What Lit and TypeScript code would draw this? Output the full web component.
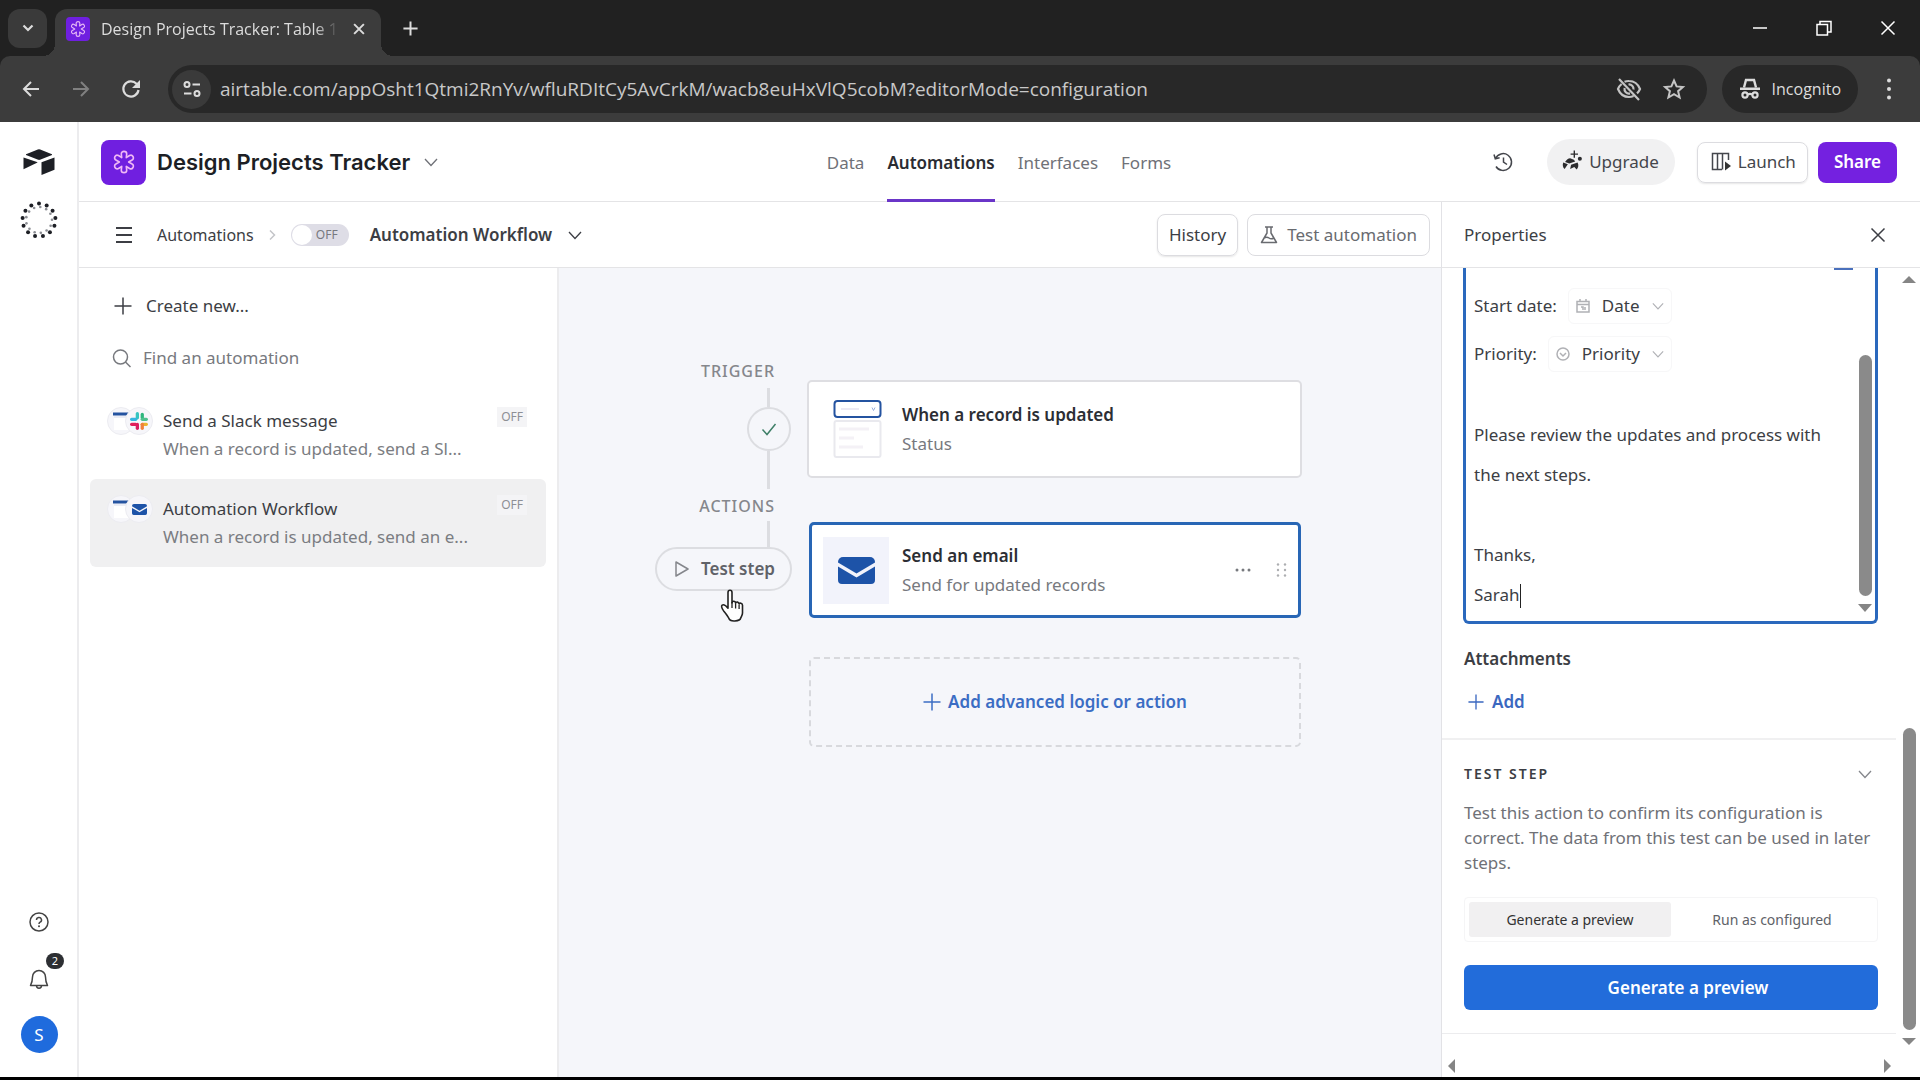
import { LitElement, html, svg, css } from "lit";
import { customElement, state } from "lit/decorators.js";
import { classMap } from "lit/directives/class-map.js";

const icon = (size: number, box: string, body: unknown, cls = "") =>
  html`<svg class="icon ${cls}" width=${size} height=${size} viewBox=${box} fill="none" stroke="currentColor" stroke-width="1.5" aria-hidden="true">${body}</svg>`;

const chevron = (size = 14) => icon(size, "0 0 14 14", svg`<path stroke-width="1.300" d="M1 4l6 6.500L13 4"/>`);
const cross = (size = 16, w = 1.5) =>
  icon(size, "0 0 16 16", svg`<path stroke-width=${w} d="M1.500 1.500l13 13M14.500 1.500l-13 13"/>`);
const plus = (size = 18, w = 1.5) => icon(size, "0 0 18 18", svg`<path stroke-width=${w} d="M9 0.500v17M0.500 9h17"/>`);
const flower = svg`<path stroke-linejoin="round" d="M12 2.200c1.500 0 2.500 1 2.500 2.300L14.100 8l3-2c1.200-.7 2.500-.3 3.200.9s.4 2.600-.8 3.200L16.300 12l3.200 1.900c1.200.6 1.500 2 .8 3.200s-2 1.600-3.200.9l-3-2 .4 3.500c0 1.300-1 2.300-2.500 2.300s-2.500-1-2.500-2.300L9.900 16l-3 2c-1.200.7-2.500.3-3.200-.9s-.4-2.600.8-3.200L7.700 12l-3.200-1.900c-1.200-.6-1.500-2-.8-3.200s2-1.600 3.200-.9l3 2-.4-3.500c0-1.300 1-2.300 2.500-2.300z"/>`;
const envelope = svg`<path fill="#1d53a8" stroke="none" d="M5 0h27a5 5 0 0 1 5 5v0.500L18.500 16.500 0 5.500V5a5 5 0 0 1 5-5z"/><path fill="#1d53a8" stroke="none" d="M0 9.500l18.500 11L37 9.500V23a4 4 0 0 1-4 4H4a4 4 0 0 1-4-4z"/>`;
const slack = svg`<g stroke="none">
  <rect x="7" y="0" width="4" height="9" rx="2" fill="#36c5c0"/><rect x="0" y="7" width="9" height="4" rx="2" fill="#36b5e0"/>
  <rect x="13" y="1" width="4" height="8" rx="2" fill="#2eb67d"/><rect x="13" y="7" width="9" height="4" rx="2" fill="#4fc08d"/>
  <rect x="7" y="13" width="4" height="9" rx="2" fill="#d81b60"/><rect x="0" y="13" width="9" height="4" rx="2" fill="#e01e5a"/>
  <rect x="13" y="13" width="9" height="4" rx="2" fill="#ecb22e"/><rect x="13" y="13" width="4" height="9" rx="2" fill="#f0803c"/></g>`;

interface Automation { name: string; summary: string; app: "slack" | "email"; }

const AUTOMATIONS: Automation[] = [
  { name: "Send a Slack message", summary: "When a record is updated, send a Sl...", app: "slack" },
  { name: "Automation Workflow", summary: "When a record is updated, send an e...", app: "email" },
];

const reset = css`
  :host { display: block; }
  * { box-sizing: border-box; }
  button, input { font: inherit; color: inherit; background: none; border: 0; padding: 0; margin: 0; }
  button { display: inline-flex; align-items: center; justify-content: center; cursor: pointer; white-space: nowrap; }
  a { color: inherit; text-decoration: none; }
  h1, h2, h3, p, ul { margin: 0; padding: 0; font: inherit; }
  .icon { display: block; flex: none; }
`;

@customElement("browser-chrome")
class BrowserChrome extends LitElement {
  static styles = [reset, css`
    :host { background: #212121; color: #dcdcdc; font: 16px/24px "Open Sans", sans-serif; }
    .strip { display: flex; align-items: center; height: 56px; padding: 0 0 0 8px; }
    .search { width: 39px; height: 39px; border-radius: 12px; background: #3a3a3a; }
    .tab { display: flex; align-items: center; align-self: flex-end; gap: 8px; width: 326px; height: 47px; margin-left: 8px; padding: 0 10px 8px 11px; background: #3c3c3c; border-radius: 12px 12px 0 0; position: relative; }
    .tab::before, .tab::after { content: ""; position: absolute; bottom: 0; width: 12px; height: 12px; }
    .tab::before { left: -12px; background: radial-gradient(circle at 0 0, transparent 12px, #3c3c3c 12px); }
    .tab::after { right: -12px; background: radial-gradient(circle at 100% 0, transparent 12px, #3c3c3c 12px); }
    .favicon { display: grid; place-items: center; width: 24px; height: 24px; border-radius: 4px; background: #6f1fe0; color: #e6b8f5; flex: none; }
    .tab-title { flex: 1; padding-left: 3px; white-space: nowrap; -webkit-mask-image: linear-gradient(90deg, #000 90%, transparent); mask-image: linear-gradient(90deg, #000 90%, transparent); }
    .tab button { width: 24px; height: 24px; }
    .new { width: 36px; height: 36px; margin-left: 11px; }
    .window { display: flex; margin-left: auto; color: #fff; }
    .window button { width: 64px; height: 56px; }
    .toolbar { display: flex; align-items: center; height: 66px; background: #3c3c3c; border-radius: 10px 10px 0 0; padding: 0 13px 0 13px; }
    .nav { width: 36px; height: 36px; }
    .nav + .nav { margin-left: 14px; }
    .dim { color: #808080; }
    .omni { flex: 1; display: flex; align-items: center; height: 48px; margin: 0 15px 0 19px; padding: 0 19px 0 4px; border-radius: 24px; background: #282828; }
    .site { width: 39px; height: 39px; border-radius: 50%; background: #3a3a3a; }
    .url { flex: 1; min-width: 0; margin-left: 9px; font-size: 19px; color: #c8c8c8; outline: 0; }
    .omni .act { width: 27px; height: 36px; margin-left: 18px; color: #c4c4c4; }
    .incognito { display: flex; align-items: center; gap: 11px; height: 48px; padding: 0 17px; border-radius: 24px; background: #282828; }
    .menu { width: 36px; height: 36px; margin-left: 13px; }
  `];

  render() {
    return html`
      <div class="strip">
        <button class="search" aria-label="Search tabs">${icon(14, "0 0 14 14", svg`<path stroke-width="2.200" d="M2.500 4.500L7 9l4.500-4.500"/>`)}</button>
        <div class="tab">
          <span class="favicon">${icon(18, "0 0 24 24", flower)}</span>
          <span class="tab-title">Design Projects Tracker: Table 1</span>
          <button aria-label="Close tab">${cross(12, 2.6)}</button>
        </div>
        <button class="new" aria-label="New tab">${plus(15, 2.4)}</button>
        <div class="window">
          <button aria-label="Minimize">${icon(16, "0 0 16 16", svg`<path d="M1 8h14"/>`)}</button>
          <button aria-label="Restore">${icon(16, "0 0 16 16", svg`<path d="M1 4.500h10.500V15H1zM4 4V1.500h11V12h-3"/>`)}</button>
          <button aria-label="Close window">${cross(16)}</button>
        </div>
      </div>
      <div class="toolbar">
        <button class="nav" aria-label="Back">${icon(18, "0 0 18 18", svg`<path stroke-width="2" d="M17 9H2M9 2L2 9l7 7"/>`)}</button>
        <button class="nav dim" aria-label="Forward">${icon(18, "0 0 18 18", svg`<path stroke-width="2" d="M1 9h15M9 2l7 7-7 7"/>`)}</button>
        <button class="nav" aria-label="Reload">${icon(20, "0 0 20 20", svg`<path stroke-width="2.200" d="M17.500 11A7.600 7.600 0 1 1 15.500 4.700L18 7"/><path fill="currentColor" stroke="none" d="M19 1v8h-8z"/>`)}</button>
        <div class="omni">
          <button class="site" aria-label="Site information">${icon(20, "0 0 20 20", svg`<circle cx="5" cy="5.500" r="2.500" stroke-width="2"/><path stroke-width="2" d="M10.500 5.500H18M2 14.500h7.500"/><circle cx="15" cy="14.500" r="2.500" stroke-width="2"/>`)}</button>
          <input class="url" aria-label="Address" value="airtable.com/appOsht1Qtmi2RnYv/wfluRDItCy5AvCrkM/wacb8euHxVlQ5cobM?editorMode=configuration">
          <button class="act" aria-label="Third-party cookies blocked">${icon(26, "0 0 26 26", svg`<path stroke-width="2.200" d="M8.500 5.800A11 11 0 0 1 13 5c5 0 9 3 11 8-.7 1.700-1.700 3.200-3 4.400M17.500 19.900A11 11 0 0 1 13 21c-5 0-9-3-11-8 .8-2 2-3.700 3.600-5M12.500 8.500a4.500 4.500 0 0 1 5 5M14 17.400A4.500 4.500 0 0 1 8.600 12M3 3l20 21"/>`)}</button>
          <button class="act" aria-label="Bookmark">${icon(24, "0 0 24 24", svg`<path stroke-width="2" stroke-linejoin="miter" d="M12 3.500l2.600 5.900 6.300.6-4.800 4.200 1.500 6.300L12 17.100l-5.600 3.400 1.500-6.300L3.100 10l6.300-.6z"/>`)}</button>
        </div>
        <div class="incognito">
          ${icon(22, "0 0 22 22", svg`<path fill="currentColor" stroke="none" d="M1 9.500h20v2.500H1z"/><path stroke-width="2.400" d="M5 9.500L7 2h8l2 7.500"/><circle cx="6" cy="17" r="2.600" stroke-width="2.200"/><circle cx="16" cy="17" r="2.600" stroke-width="2.200"/><path stroke-width="2.200" d="M8.600 16.500q2.400-1.200 4.800 0"/>`)}
          <span>Incognito</span>
        </div>
        <button class="menu" aria-label="Menu">${icon(22, "0 0 22 22", svg`<g fill="currentColor" stroke="none"><circle cx="11" cy="2.500" r="2"/><circle cx="11" cy="11" r="2"/><circle cx="11" cy="19.500" r="2"/></g>`)}</button>
      </div>`;
  }
}

@customElement("side-rail")
class SideRail extends LitElement {
  static styles = [reset, css`
    :host { display: flex; flex-direction: column; align-items: center; width: 79px; padding: 23px 0 24px 1px; border-right: 2px solid #ececee; color: #444; }
    .loader { margin-top: 24px; color: #1d1f25; }
    .bottom { display: flex; flex-direction: column; align-items: center; margin-top: auto; }
    .bell { position: relative; margin-top: 36px; }
    .count { position: absolute; left: 18px; top: -15px; width: 18px; height: 16px; border-radius: 8px; background: #2d2f33; color: #fff; font: 11px/16px "Noto Sans", sans-serif; text-align: center; }
    .avatar { width: 37px; height: 37px; margin-top: 26px; border-radius: 50%; background: #1f6bdd; color: #fff; font: 17px/24px "Noto Sans", sans-serif; }
  `];

  render() {
    const dots = Array.from({ length: 13 }, (_, i) => (i * 2 * Math.PI) / 13 - Math.PI / 2);
    return html`
      <a href="#home" aria-label="Home">${icon(32, "0 0 32 32", svg`<g fill="#1d1f25" stroke="none"><path d="M14.800 4.400L3 9.300v.7l12.200 4.800c.6.200 1.200.2 1.800 0L29 10v-.7L17.200 4.400a3 3 0 0 0-2.400 0z"/><path d="M31.500 12.500v12.200L18.500 30V17.300z"/><path d="M0.500 12.600v11.600L13.500 18l1.200-.7z"/></g>`)}</a>
      <div class="loader">${icon(38, "0 0 38 38", dots.map((a) => svg`<g stroke="none"><circle fill="#1d1f25" cx=${19 + 16.5 * Math.cos(a)} cy=${19 + 16.5 * Math.sin(a)} r="2"/><circle fill="#8c8e94" cx=${19 + 13 * Math.cos(a + 0.1)} cy=${19 + 13 * Math.sin(a + 0.1)} r="1.300"/></g>`))}</div>
      <div class="bottom">
        <button aria-label="Help">${icon(20, "0 0 20 20", svg`<circle cx="10" cy="10" r="9"/><path d="M7.500 8a2.500 2.500 0 1 1 3.600 2.200c-.8.400-1.100.9-1.100 1.800"/><circle cx="10" cy="14.300" r="1" fill="currentColor" stroke="none"/>`)}</button>
        <button class="bell" aria-label="Notifications">${icon(22, "0 0 22 22", svg`<path stroke-linejoin="round" d="M4.500 9a6.500 6.500 0 0 1 13 0c0 4 1 6.500 2 8.500h-17c1-2 2-4.500 2-8.500zM8.500 17.500c0 3.500 5 3.500 5 0"/>`)}<span class="count">2</span></button>
        <button class="avatar">S</button>
      </div>`;
  }
}

@customElement("base-header")
class BaseHeader extends LitElement {
  static styles = [reset, css`
    :host { display: grid; grid-template-columns: 1fr auto 1fr; align-items: center; height: 80px; padding: 0 23px 0 22px; border-bottom: 1px solid #e4e4e6; color: #3a3c42; }
    .base { display: flex; align-items: center; gap: 11px; }
    .base button { margin-left: 3px; color: #6f7177; }
    .logo { display: grid; place-items: center; width: 45px; height: 45px; border-radius: 8px; background: #701fe0; color: #f0b8f5; }
    h1 { font: 600 22px/32px Inter, sans-serif; color: #1d1f25; }
    nav { display: flex; gap: 23px; height: 100%; }
    nav a { display: flex; align-items: center; height: 80px; padding-top: 1px; color: #6f7177; }
    nav a.active { color: #2a2c32; font-weight: 600; border-bottom: 3px solid #6a35c8; border-top: 3px solid transparent; }
    .actions { display: flex; align-items: center; justify-content: flex-end; color: #44464c; }
    .upgrade { gap: 5px; height: 46px; margin-left: 34px; padding: 0 16px 0 13px; border-radius: 23px; background: #f1f1f2; }
    .launch { gap: 7px; height: 41px; margin-left: 22px; padding: 0 11px 0 13px; border: 1px solid #dcdce0; border-radius: 8px; box-shadow: 0 1px 2px #0000001a; }
    .share { height: 41px; margin-left: 10px; padding: 0 16px; border-radius: 8px; background: #7421e0; color: #fff; font-weight: 600; }
  `];

  render() {
    return html`
      <div class="base">
        <span class="logo">${icon(26, "0 0 24 24", flower)}</span>
        <h1>Design Projects Tracker</h1>
        <button aria-label="Base options">${chevron()}</button>
      </div>
      <nav aria-label="Base">
        <a href="#data">Data</a><a class="active" href="#automations">Automations</a>
        <a href="#interfaces">Interfaces</a><a href="#forms">Forms</a>
      </nav>
      <div class="actions">
        <button aria-label="Base history">${icon(20, "0 0 20 20", svg`<path d="M2.500 6.500A8.400 8.400 0 1 1 3 14.500M1 2.500l1.300 4.300 4.300-1M10.500 5.500V10l3.500 2.500"/>`)}</button>
        <button class="upgrade">${icon(24, "0 0 24 26", svg`<g fill="#2c2c2e" stroke="none"><path d="M10 9l4 1.500 1.500 2L9 14.500 4.500 13C6 10.500 8 9 10 9z"/><path d="M2.500 13.500l5 2L4 20.500c-2-1.500-2.500-4.500-1.500-7zM11 16l7-2.500c1.500 2.500 1 5.500-1 7.500l-2.500-2.500-4.500 2z"/><circle cx="20.500" cy="9.500" r="2.200"/></g><path stroke="#2c2c2e" d="M14.500 0.500v8M10.500 4.500h8"/>`)}Upgrade</button>
        <button class="launch">${icon(20, "0 0 20 20", svg`<path d="M11 17.500H1.500v-16h16V8M6.500 1.500v16M11.500 1.500v16"/><path fill="#333" stroke="none" d="M14 9.500l6 4.500-6 4.500z"/>`)}Launch</button>
        <button class="share">Share</button>
      </div>`;
  }
}

@customElement("automation-list")
class AutomationList extends LitElement {
  @state() private selected = 1;

  static styles = [reset, css`
    :host { padding: 21px 11px; border-right: 2px solid #ececee; color: #3c3e44; }
    .create { gap: 14px; height: 34px; padding: 0 24px; }
    .find { display: flex; align-items: center; gap: 12px; height: 34px; margin: 18px 0 16px; padding: 0 22px; color: #77797e; }
    .find input { flex: 1; min-width: 0; outline: 0; }
    .find input::placeholder { color: #77797e; opacity: 1; }
    .item { display: grid; grid-template-columns: 56px 1fr auto; align-items: start; width: 100%; height: 88px; padding: 16px 19px 16px 17px; border-radius: 6px; text-align: left; }
    .item.selected { background: #f0f0f1; }
    .apps { display: flex; }
    .app { display: grid; place-items: center; width: 28px; height: 28px; border-radius: 50%; background: #f6f6fa; border: 1px solid #ececf1; }
    .app.table { align-items: start; }
    .app + .app { margin-left: -10px; }
    .name { line-height: 28px; }
    .summary { line-height: 28px; color: #7b7d82; white-space: nowrap; }
    .off { height: 20px; padding: 0 4px; background: #f4f4f6; color: #8d8f95; font-size: 12px; line-height: 20px; }
  `];

  render() {
    return html`
      <button class="create">${plus()}Create new...</button>
      <label class="find">${icon(19, "0 0 19 19", svg`<circle cx="8.500" cy="8" r="7"/><path d="M13.500 13l5 5"/>`)}<input type="search" placeholder="Find an automation" aria-label="Find an automation"></label>
      ${AUTOMATIONS.map((a, i) => html`
        <button class=${classMap({ item: true, selected: i === this.selected })} @click=${() => (this.selected = i)}>
          <span class="apps">
            <span class="app table">${icon(22, "0 0 22 22", svg`<path fill="#fff" stroke="none" d="M4 10h15v12H4z"/><path stroke="#2453a0" stroke-width="3" d="M3 6h16"/><path stroke="#dfe3f0" stroke-width="1" d="M4 9h15v12"/>`)}</span>
            <span class="app">${a.app === "slack" ? icon(18, "0 0 22 22", slack) : icon(15, "0 0 37 27", envelope)}</span>
          </span>
          <span><div class="name">${a.name}</div><div class="summary">${a.summary}</div></span>
          <span class="off">OFF</span>
        </button>`)}`;
  }
}

@customElement("workflow-canvas")
class WorkflowCanvas extends LitElement {
  static styles = [reset, css`
    :host { display: flex; justify-content: center; gap: 15px; padding: 93px 43px 0 0; background: #f5f6fa; color: #2c2e34; }
    .track { display: flex; flex-direction: column; align-items: flex-end; }
    .track > h2 { line-height: 20px; padding-right: 17px; color: #85878c; font-size: 16px; font-weight: 500; letter-spacing: 1px; }
    .line { width: 3px; margin-right: 22px; background: #dcdde1; }
    .short { height: 19px; margin-top: 7px; }
    .long { height: 38px; margin-bottom: 7px; }
    .stub { height: 26px; margin-top: 5px; }
    .done { display: grid; place-items: center; width: 44px; height: 44px; margin-right: 1px; border: 2px solid #dcdde1; border-radius: 50%; color: #3f7f68; }
    .test { position: relative; }
    .test button { gap: 11px; height: 44px; padding: 0 15px 0 17px; border: 2px solid #dcdde1; border-radius: 22px; color: #606268; font-weight: 600; }
    .test button .icon { color: #85878c; }
    .cursor { position: absolute; left: 62px; top: 42px; }
    .cards { display: flex; flex-direction: column; width: 495px; margin-top: 19px; }
    .card { display: flex; align-items: center; height: 98px; background: #fff; border: 2px solid #dedee2; border-radius: 5px; }
    .card.trigger { padding-left: 24px; gap: 19px; }
    .card.action { height: 96px; margin: 44px 1px 0 2px; padding: 0 9px 0 11px; gap: 13px; border: 3px solid #2866b5; }
    .mail { display: grid; place-items: center; width: 66px; height: 67px; background: #f2f3fb; }
    .name { padding-top: 2px; line-height: 28px; font-weight: 600; }
    .detail { line-height: 30px; color: #77797e; }
    .grow { flex: 1; }
    .card button { color: #77797e; }
    .card .drag { margin-left: -8px; padding-left: 10px; }
    .add { gap: 7px; height: 90px; margin: 39px 1px 0 2px; border: 2px dashed #d8d9dd; border-radius: 5px; color: #3b6dc4; font-weight: 600; }
  `];

  render() {
    return html`
      <div class="track">
        <h2>TRIGGER</h2>
        <div class="line short"></div>
        <div class="done">${icon(18, "0 0 18 18", svg`<path d="M2.500 9.500l4.500 5L15.500 4"/>`)}</div>
        <div class="line long"></div>
        <h2>ACTIONS</h2>
        <div class="line stub"></div>
        <div class="test">
          <button>${icon(16, "0 0 16 16", svg`<path stroke-linejoin="round" d="M2 1l12 7-12 7z"/>`)}Test step</button>
          <svg class="cursor" width="28" height="34" viewBox="0 0 28 34" aria-hidden="true"><path fill="#fff" stroke="#222" stroke-width="1.600" stroke-linejoin="round" d="M11 3.500c0-3 4-3 4 0V14c.3-2.600 3.600-2.200 3.600.300.400-1.900 3.500-1.600 3.500.8.500-1.500 3.400-1.300 3.400 1.200V24c0 2-1 3-1.800 5-.6 3.200-10.700 4.600-12 0-1-2-3-4.500-5-7-1.400-2-3.200-4.500-1.500-5.800 1.600-1.200 3.800.6 5.800 3z"/><path stroke="#222" stroke-width="1.300" d="M15 13v6M18.600 15v4.500M22.100 16v4"/></svg>
        </div>
      </div>
      <div class="cards">
        <article class="card trigger">
          <svg class="icon" width="50" height="60" viewBox="0 0 50 60" fill="none" aria-hidden="true">
            <rect x="1.500" y="2" width="46" height="16" rx="3" stroke="#2453a0" stroke-width="2"/><path d="M8 10h18" stroke="#eceaf4" stroke-width="2"/><path d="M39 8.500l1.500 3 1.500-3" stroke="#9ab0dc"/>
            <rect x="1.500" y="22" width="46" height="36" rx="2" stroke="#e9e9ee" stroke-width="2"/><path d="M6 30h30M6 39h15M6 48h24" stroke="#f4f1f6" stroke-width="3"/>
          </svg>
          <div><h3 class="name">When a record is updated</h3><p class="detail">Status</p></div>
        </article>
        <article class="card action">
          <span class="mail"><svg class="icon" width="37" height="27" viewBox="0 0 37 27" aria-hidden="true">${envelope}</svg></span>
          <div class="grow"><h3 class="name">Send an email</h3><p class="detail">Send for updated records</p></div>
          <button aria-label="More options">${icon(34, "0 0 34 34", svg`<g fill="currentColor" stroke="none"><circle cx="11" cy="17" r="1.500"/><circle cx="17" cy="17" r="1.500"/><circle cx="23" cy="17" r="1.500"/></g>`)}</button>
          <button class="drag" aria-label="Reorder">${icon(14, "0 0 14 14", svg`<g fill="currentColor" stroke="none" opacity=".6"><circle cx="3" cy="1.500" r="1.200"/><circle cx="3" cy="7" r="1.200"/><circle cx="3" cy="12.500" r="1.200"/><circle cx="10" cy="1.500" r="1.200"/><circle cx="10" cy="7" r="1.200"/><circle cx="10" cy="12.500" r="1.200"/></g>`)}</button>
        </article>
        <button class="add">${plus(18)}Add advanced logic or action</button>
      </div>`;
  }
}

@customElement("properties-panel")
class PropertiesPanel extends LitElement {
  @state() private mode = "preview";

  static styles = [reset, css`
    :host { display: flex; flex-direction: column; border-left: 1px solid #e2e2e6; color: #3c3e44; background: #fff; }
    .head { display: flex; align-items: center; justify-content: space-between; height: 66px; padding: 0 34px 0 22px; border-bottom: 1px solid #e4e4e6; flex: none; }
    .scroll { flex: 1; display: grid; grid-template-columns: 1fr 24px; min-height: 0; }
    .body { display: flex; flex-direction: column; }
    .message { position: relative; display: grid; grid-template-columns: 1fr 14px; height: 356px; margin: 0 18px 0 21px; padding: 19px 3px 6px 8px; border: solid #2a68bd; border-width: 0 3px 3px; border-radius: 0 0 6px 6px; flex: none; }
    .message::before { content: ""; position: absolute; right: 22px; top: 0; width: 19px; height: 2px; background: #4a70bc; }
    .text { outline: 0; line-height: 40px; }
    .field { display: flex; align-items: center; height: 38px; margin-bottom: 10px; }
    .token { gap: 12px; height: 36px; margin-left: 11px; padding: 0 7px; border: 1px solid #f7f7f8; border-radius: 6px; color: #3c3e44; }
    .token .icon { color: #b0b1b5; }
    .gap { height: 32px; }
    .blank { height: 40px; }
    .caret { display: inline-block; width: 1px; height: 24px; background: #222; vertical-align: middle; }
    .inner { display: flex; flex-direction: column; align-items: center; gap: 5px; padding-top: 68px; color: #8a8a8a; }
    .thumb { width: 13px; border-radius: 7px; background: #8a8a8a; flex: 1; }
    .attach { padding: 21px 22px; border-bottom: 2px solid #f0f0f1; }
    .attach h3 { line-height: 28px; font-weight: 600; }
    .attach button { gap: 8px; height: 30px; margin: 14px 0 0 4px; color: #3b68c0; font-weight: 600; }
    .step { padding: 21px 18px 23px 22px; border-bottom: 1px solid #ececee; }
    .title { display: flex; align-items: center; justify-content: space-between; height: 26px; padding-right: 6px; }
    .title h3 { font-size: 14px; font-weight: 600; letter-spacing: 2px; }
    .title button { color: #85878c; }
    .step p { line-height: 25px; margin-top: 13px; color: #6f7177; }
    .modes { display: grid; grid-template-columns: 1fr 1fr; height: 45px; margin: 22px 0 23px; padding: 4px; border: 1px solid #f5f5f6; border-radius: 4px; font-size: 14px; line-height: 35px; text-align: center; color: #606268; }
    .modes label { border-radius: 3px; cursor: pointer; }
    .modes label.on { background: #f1f0f1; color: #333; }
    .modes input { position: absolute; opacity: 0; }
    .run { width: 100%; height: 45px; padding-left: 34px; border-radius: 6px; background: #226cda; color: #fff; font-weight: 600; }
    .bars { display: flex; align-items: center; flex-direction: column; gap: 5px; padding: 5px 0 10px 2px; color: #8a8a8a; }
    .rest { flex: 431; }
    .bars .thumb { flex: 302; }
    .across { display: flex; justify-content: space-between; padding: 0 26px 4px 3px; }
  `];

  private arrow = (d: string) => html`<svg class="icon" width="14" height="14" viewBox="0 0 14 14" aria-hidden="true"><path fill="#858585" d=${d}/></svg>`;

  render() {
    return html`
      <div class="head"><h2>Properties</h2><button aria-label="Close panel">${cross(16)}</button></div>
      <div class="scroll">
        <div class="body">
          <div class="message">
            <div class="text" role="textbox" aria-multiline="true" aria-label="Message">
              <div class="field">Start date:
                <button class="token">${icon(14, "0 0 14 14", svg`<path d="M1 2.500h12V13H1zM1 5.500h12M4 0v3M10 0v3M5 8h2v3M9 8v3"/>`)}Date${chevron(12)}</button></div>
              <div class="field">Priority:
                <button class="token">${icon(14, "0 0 14 14", svg`<circle cx="7" cy="7" r="6"/><path d="M4 6l3 3 3-3"/>`)}Priority${chevron(12)}</button></div>
              <div class="gap"></div>
              <div>Please review the updates and process with<br>the next steps.</div>
              <div class="blank"></div>
              <div>Thanks,</div>
              <div>Sarah<span class="caret"></span></div>
            </div>
            <div class="inner"><div class="thumb"></div>${this.arrow("M0 3h14l-7 8z")}</div>
          </div>
          <section class="attach"><h3>Attachments</h3><button>${plus(16)}Add</button></section>
          <section class="step">
            <div class="title"><h3>TEST STEP</h3><button aria-label="Collapse">${chevron()}</button></div>
            <p>Test this action to confirm its configuration is correct. The data from this test can be used in later steps.</p>
            <div class="modes">
              ${[["preview", "Generate a preview"], ["run", "Run as configured"]].map(([v, t]) => html`
                <label class=${classMap({ on: this.mode === v })}><input type="radio" name="mode" .checked=${this.mode === v} @change=${() => (this.mode = v)}>${t}</label>`)}
            </div>
            <button class="run">Generate a preview</button>
          </section>
        </div>
        <div class="bars">${this.arrow("M0 10h14l-7-7z")}<div class="rest"></div><div class="thumb"></div>${this.arrow("M0 3h14l-7 7z")}</div>
      </div>
      <div class="across">${this.arrow("M10 0v14L3 7z")}${this.arrow("M4 0v14l7-7z")}</div>`;
  }
}

@customElement("app-root")
class AppRoot extends LitElement {
  @state() private enabled = false;

  static styles = [reset, css`
    :host { display: grid; box-sizing: border-box; grid-template-rows: auto 1fr; height: 100vh; background: #fff; border-bottom: 3px solid #000; font: 17px/26px "Noto Sans", "Open Sans", sans-serif; color: #3c3e44; overflow: hidden; }
    .app { display: grid; grid-template-columns: auto 1fr; min-height: 0; }
    .base { display: grid; grid-template-rows: auto 1fr; min-height: 0; }
    .work { display: grid; grid-template-columns: 1fr 479px; min-height: 0; }
    .editor { display: grid; grid-template-rows: 66px 1fr; min-width: 0; }
    .bar { display: flex; align-items: center; padding: 0 11px 0 36px; border-bottom: 1px solid #e4e4e6; }
    .crumb { margin: 0 13px 0 24px; font-size: 16px; }
    .crumb-sep { color: #c4c5c9; }
    .toggle { display: flex; align-items: center; width: 58px; height: 22px; margin: 0 21px 0 14px; padding: 1px 11px 1px 1px; border-radius: 11px; background: #dedde6; color: #77797e; font-size: 12px; line-height: 20px; justify-content: space-between; cursor: pointer; }
    .toggle input { position: absolute; opacity: 0; }
    .knob { width: 20px; height: 20px; border-radius: 50%; background: #fff; }
    h2 { font-weight: 600; margin-right: 16px; }
    .btn { height: 42px; padding: 0 11px; border: 1px solid #dcdce0; border-radius: 8px; }
    .history { margin-left: auto; box-shadow: 0 1px 2px #0000001a; }
    .try { gap: 9px; margin-left: 9px; padding: 0 12px; color: #696b70; }
    .panes { display: grid; grid-template-columns: 480px 1fr; }
  `];

  render() {
    return html`
      <browser-chrome></browser-chrome>
      <div class="app">
        <side-rail></side-rail>
        <div class="base">
          <base-header></base-header>
          <div class="work">
            <div class="editor">
              <div class="bar">
                <button aria-label="Toggle list">${icon(18, "0 0 18 18", svg`<path stroke-width="1.800" d="M1 2h16M1 9h16M1 16h16"/>`)}</button>
                <a class="crumb" href="#automations">Automations</a>
                <span class="crumb-sep">${icon(10, "0 0 10 10", svg`<path d="M3 0.500L7.500 5 3 9.500"/>`)}</span>
                <label class="toggle"><input type="checkbox" aria-label="Automation on" .checked=${this.enabled} @change=${() => (this.enabled = !this.enabled)}><span class="knob"></span>OFF</label>
                <h2>Automation Workflow</h2>
                <button aria-label="Automation options">${chevron()}</button>
                <button class="btn history">History</button>
                <button class="btn try">${icon(18, "0 0 18 18", svg`<path stroke-linejoin="round" d="M5 1h8M7 1v6L1.500 16.500h15L11 7V1M4 12q3-1.500 5 0t5 0"/>`)}Test automation</button>
              </div>
              <div class="panes">
                <automation-list></automation-list>
                <workflow-canvas></workflow-canvas>
              </div>
            </div>
            <properties-panel></properties-panel>
          </div>
        </div>
      </div>`;
  }
}
